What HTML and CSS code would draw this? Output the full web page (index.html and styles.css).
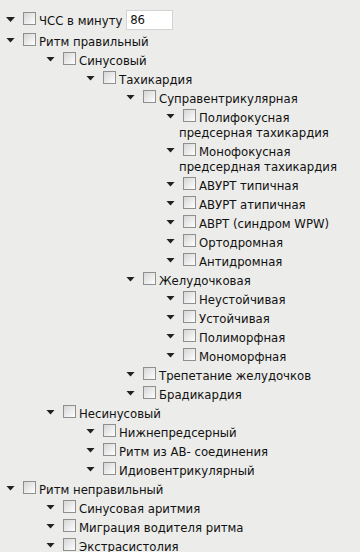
FILE: index.html
```html
<!DOCTYPE html>
<html lang="ru">
<head>
  <meta charset="UTF-8">
  <title>Ритм</title>
  <link rel="stylesheet" href="styles.css">
</head>
<body>
  <ul class="tree">
    <li><label><input type="checkbox">ЧСС в минуту</label> <input type="text" class="num" value="86"></li>
    <li><label><input type="checkbox">Ритм правильный</label>
      <ul>
        <li><label><input type="checkbox">Синусовый</label>
          <ul>
            <li><label><input type="checkbox">Тахикардия</label>
              <ul>
                <li><label><input type="checkbox">Суправентрикулярная</label>
                  <ul>
                    <li><label><input type="checkbox">Полифокусная предсерная тахикардия</label></li>
                    <li><label><input type="checkbox">Монофокусная предсердная тахикардия</label></li>
                    <li><label><input type="checkbox">АВУРТ типичная</label></li>
                    <li><label><input type="checkbox">АВУРТ атипичная</label></li>
                    <li><label><input type="checkbox">АВРТ (синдром WPW)</label></li>
                    <li><label><input type="checkbox">Ортодромная</label></li>
                    <li><label><input type="checkbox">Антидромная</label></li>
                  </ul>
                </li>
                <li><label><input type="checkbox">Желудочковая</label>
                  <ul>
                    <li><label><input type="checkbox">Неустойчивая</label></li>
                    <li><label><input type="checkbox">Устойчивая</label></li>
                    <li><label><input type="checkbox">Полиморфная</label></li>
                    <li><label><input type="checkbox">Мономорфная</label></li>
                  </ul>
                </li>
                <li><label><input type="checkbox">Трепетание желудочков</label></li>
                <li><label><input type="checkbox">Брадикардия</label></li>
              </ul>
            </li>
          </ul>
        </li>
        <li><label><input type="checkbox">Несинусовый</label>
          <ul>
            <li><label><input type="checkbox">Нижнепредсерный</label></li>
            <li><label><input type="checkbox">Ритм из АВ- соединения</label></li>
            <li><label><input type="checkbox">Идиовентрикулярный</label></li>
          </ul>
        </li>
      </ul>
    </li>
    <li><label><input type="checkbox">Ритм неправильный</label>
      <ul>
        <li><label><input type="checkbox">Синусовая аритмия</label></li>
        <li><label><input type="checkbox">Миграция водителя ритма</label></li>
        <li><label><input type="checkbox">Экстрасистолия</label></li>
      </ul>
    </li>
  </ul>
</body>
</html>
```

FILE: styles.css
```css
body {
  font-family: "DejaVu Sans Condensed", "DejaVu Sans", Verdana, sans-serif;
  font-size: 13px;
  line-height: 15px;
  margin: 0;
  padding: 9px 0 0 0;
  background-color: #ececea;
  color: #111;
}

.tree {
  margin: 0;
  padding-left: 19px;
}

.tree ul {
  margin: 0;
  padding-left: 40px;
}

.tree li {
  list-style: none;
}

/* open-branch arrow */
.tree li::before {
  content: "";
  display: inline-block;
  width: 9px;
  height: 5px;
  margin: 0 4px 0 -13px;
  vertical-align: 3px;
  background: #222;
  clip-path: polygon(0 0, 100% 0, 50% 100%);
}

.tree input[type="checkbox"] {
  appearance: none;
  width: 13px;
  height: 13px;
  margin: 3px 3px 0 4px;
  vertical-align: baseline;
  border: 1px solid #8e8f8f;
  background: linear-gradient(135deg, #d6d6d6, #f2f2f2 70%, #ffffff);
  box-sizing: border-box;
}

.num {
  width: 47px;
  height: 20px;
  box-sizing: border-box;
  margin: 0;
  padding: 1px 3px;
  vertical-align: 1px;
  border: 1px solid #d3d3d3;
  font-family: "DejaVu Sans Condensed", "DejaVu Sans", Verdana, sans-serif;
  font-size: 13px;
  color: #111;
  background: #fff;
}
```
